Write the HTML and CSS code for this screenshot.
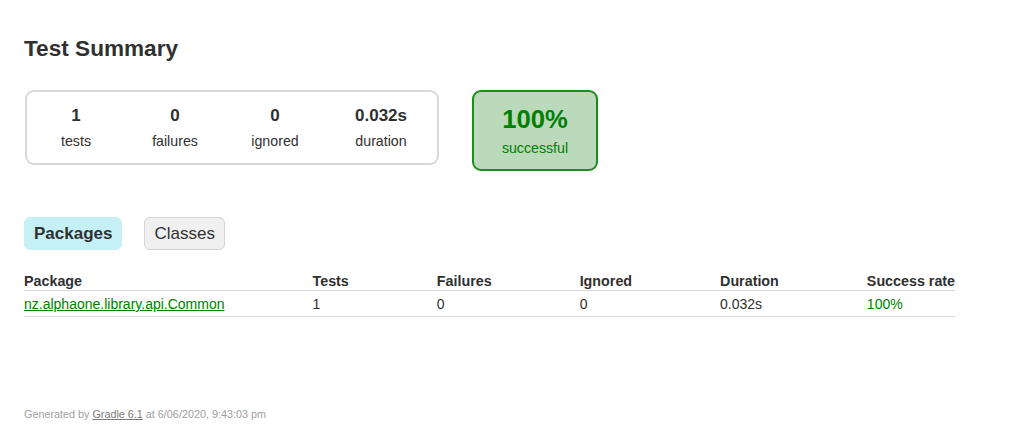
FILE: index.html
```html
<!DOCTYPE html>
<html lang="en">
<head>
<meta charset="utf-8">
<title>Test results - Test Summary</title>
<link rel="stylesheet" href="styles.css">
</head>
<body>
<div class="content">
  <h1 class="title">Test Summary</h1>
  <div class="summary">
    <div class="summary-group">
      <div class="info-box info-box-first">
        <div class="counter">1</div>
        <p class="label">tests</p>
      </div>
      <div class="info-box">
        <div class="counter">0</div>
        <p class="label">failures</p>
      </div>
      <div class="info-box">
        <div class="counter">0</div>
        <p class="label">ignored</p>
      </div>
      <div class="info-box info-box-wide">
        <div class="counter">0.032s</div>
        <p class="label">duration</p>
      </div>
    </div>
    <div class="success-rate">
      <div class="percent">100%</div>
      <p class="label">successful</p>
    </div>
  </div>

  <ul class="tab-links">
    <li class="tab tab-selected">Packages</li>
    <li class="tab">Classes</li>
  </ul>

  <table class="results">
    <thead>
      <tr>
        <th>Package</th>
        <th>Tests</th>
        <th>Failures</th>
        <th>Ignored</th>
        <th>Duration</th>
        <th>Success rate</th>
      </tr>
    </thead>
    <tbody>
      <tr>
        <td class="success"><a class="pkg-link" href="#">nz.alphaone.library.api.Common</a></td>
        <td>1</td>
        <td>0</td>
        <td>0</td>
        <td>0.032s</td>
        <td class="success">100%</td>
      </tr>
    </tbody>
  </table>

  <div class="footer">Generated by <a class="footer-link" href="#">Gradle 6.1</a> at 6/06/2020, 9:43:03 pm</div>
</div>
</body>
</html>
```

FILE: styles.css
```css
html, body {
  margin: 0;
  padding: 0;
  background: #ffffff;
}

body {
  font-family: "Liberation Sans", Arial, sans-serif;
  font-size: 14.2px;
  color: #303030;
}

.content {
  padding: 0 24px;
}

.title {
  margin: 0;
  padding-top: 36px;
  font-size: 22.6px;
  line-height: 26px;
  font-weight: bold;
  white-space: nowrap;
}

.summary {
  margin-top: 28px;
  display: flex;
  align-items: flex-start;
}

.summary-group {
  margin-left: 1px;
  width: 410px;
  border: 2px solid #d8d8d8;
  border-radius: 9px;
  display: flex;
}

.info-box {
  width: 100px;
  padding: 14px 0 14px;
  text-align: center;
}

.info-box-first {
  width: 98px;
}

.info-box-wide {
  width: 112px;
}

.counter {
  font-size: 17px;
  font-weight: bold;
  line-height: 20px;
  margin-bottom: 7px;
}

.label {
  margin: 0;
  line-height: 16px;
}

.success-rate {
  margin-left: 33px;
  width: 122px;
  padding: 14px 0 13px;
  border: 2px solid #1e8c1e;
  border-radius: 9px;
  background: #bbd9bb;
  color: #008000;
  text-align: center;
}

.percent {
  font-size: 25.6px;
  font-weight: bold;
  line-height: 27px;
  margin-bottom: 7px;
}

.tab-links {
  list-style: none;
  margin: 46px 0 0;
  padding: 0;
  display: flex;
  gap: 22px;
}

.tab {
  padding: 4px 9px;
  line-height: 23px;
  font-size: 17px;
  border: 1px solid #d4d4d4;
  border-radius: 6px;
  background: #f0f0f0;
}

.tab-selected {
  font-weight: bold;
  background: #c5f0f5;
  border-color: #c5f0f5;
}

.results {
  margin-top: 22px;
  border-collapse: collapse;
  font-size: 14px;
  border-bottom: 1px solid #d8d8d8;
}

.results th {
  text-align: left;
  white-space: nowrap;
  padding: 1px 0 1px 88px;
  font-size: 14.3px;
  line-height: 16px;
  border-bottom: 1px solid #d8d8d8;
}

.results td {
  white-space: nowrap;
  padding: 5px 0 4px 88px;
  line-height: 16px;
}

.results th:first-child,
.results td:first-child {
  padding-left: 0;
}

.success {
  color: #008000;
}

.pkg-link {
  color: #008000;
  text-decoration: underline;
}

.footer {
  margin-top: 91px;
  font-size: 10.8px;
  line-height: 12px;
  color: #a0a0a0;
  white-space: nowrap;
}

.footer-link {
  color: #7a7a7a;
  text-decoration: underline;
}
```
